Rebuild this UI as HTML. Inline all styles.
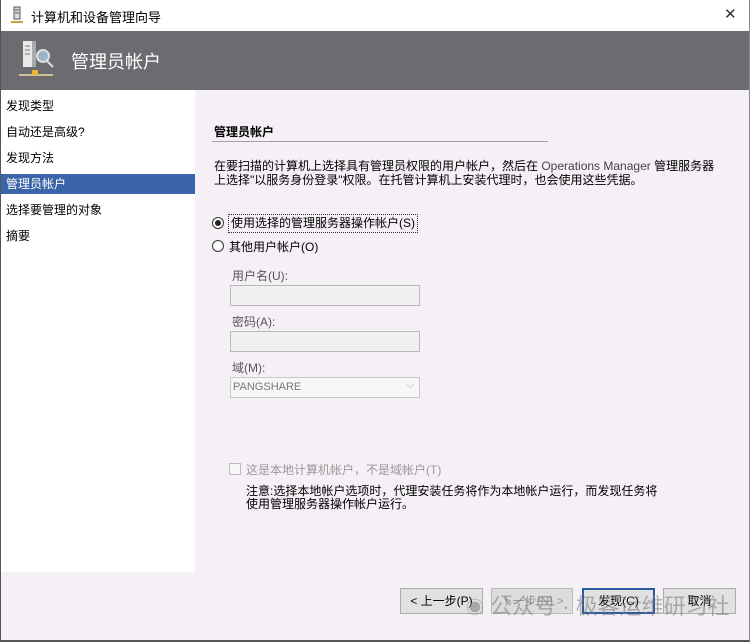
<!DOCTYPE html>
<html><head><meta charset="utf-8"><style>
*{margin:0;padding:0;box-sizing:border-box}
body{width:750px;height:642px;overflow:hidden;background:#f5eff6;font-family:"Liberation Sans","Noto Sans CJK SC",sans-serif;font-size:12px;color:#000;position:relative}
.abs{position:absolute}
#frame{left:0;top:0;width:750px;height:642px;border-left:1px solid #555;border-right:1px solid #888;border-bottom:2px solid #555}
#title{left:0;top:0;width:750px;height:31px;background:#fff}
#header{left:0;top:31px;width:750px;height:59px;background:#6b6b70}
#left{left:1px;top:90px;width:194px;height:482px;background:#fff}
.nav{position:absolute;left:6px;font-size:12px}
.sel{left:1px;width:194px;height:20px;background:#3b64a8;color:#fff;padding-left:5px;line-height:20px}
.inp{position:absolute;left:230px;width:190px;height:21px;background:#f0f0f0;border:1px solid #b9b9b9}
.btn{position:absolute;top:588px;height:26px;border:1px solid #adadad;background:#e1e1e1;text-align:center;line-height:24px;font-size:12px}
.radio{position:absolute;width:12px;height:12px;border:1px solid #333;border-radius:50%;background:#fff}
</style></head><body>
<div class="abs" id="title"></div>
<svg class="abs" style="left:10px;top:6px" width="14" height="18" viewBox="0 0 14 18"><rect x="4" y="1" width="6" height="12" fill="#ddd" stroke="#555"/><line x1="5" y1="4" x2="9" y2="4" stroke="#555"/><line x1="5" y1="7" x2="9" y2="7" stroke="#555"/><rect x="1" y="15" width="12" height="2" fill="#c8a040"/></svg>
<div class="abs" style="left:31px;top:7px;font-size:13px">计算机和设备管理向导</div>
<div class="abs" style="left:724px;top:5px;font-size:15px;color:#333">✕</div>
<div class="abs" id="header"></div>
<svg class="abs" style="left:16px;top:40px" width="40" height="40" viewBox="0 0 40 40"><rect x="7" y="1" width="9" height="26" fill="#e8e8e8"/><rect x="16" y="1" width="4" height="26" fill="#aaa"/><line x1="9" y1="6" x2="14" y2="6" stroke="#777"/><line x1="9" y1="10" x2="14" y2="10" stroke="#777"/><line x1="9" y1="14" x2="14" y2="14" stroke="#777"/><circle cx="27" cy="16" r="6" fill="#9bb4c8" stroke="#ddd" stroke-width="2"/><line x1="31" y1="21" x2="37" y2="27" stroke="#ddd" stroke-width="2"/><rect x="3" y="34" width="34" height="2" fill="#d0c090"/><rect x="16" y="30" width="6" height="5" fill="#e8b830"/></svg>
<div class="abs" style="left:71px;top:48px;font-size:18px;color:#fff">管理员帐户</div>
<div class="abs" id="left"></div>
<div class="nav" style="top:97px">发现类型</div>
<div class="nav" style="top:123px">自动还是高级?</div>
<div class="nav" style="top:149px">发现方法</div>
<div class="abs sel" style="top:174px">管理员帐户</div>
<div class="nav" style="top:201px">选择要管理的对象</div>
<div class="nav" style="top:227px">摘要</div>
<div class="abs" style="left:214px;top:123px;font-weight:bold;font-size:12px">管理员帐户</div>
<div class="abs" style="left:212px;top:141px;width:336px;height:1px;background:#a0a0a0"></div>
<div class="abs" style="left:214px;top:159px;line-height:14px;width:520px">在要扫描的计算机上选择具有管理员权限的用户帐户，然后在 <span style="color:#444">Operations Manager</span> 管理服务器<br>上选择"以服务身份登录"权限。在托管计算机上安装代理时，也会使用这些凭据。</div>
<div class="radio" style="left:212px;top:217px"><div style="position:absolute;left:2px;top:2px;width:6px;height:6px;border-radius:50%;background:#222"></div></div>
<div class="abs" style="left:228px;top:214px;border:1px dotted #333;padding:0 2px;height:19px;line-height:17px">使用选择的管理服务器操作帐户(S)</div>
<div class="radio" style="left:212px;top:240px"></div>
<div class="abs" style="left:229px;top:238px">其他用户帐户(O)</div>
<div class="abs" style="left:232px;top:267px;color:#555">用户名(U):</div>
<div class="inp" style="top:285px"></div>
<div class="abs" style="left:232px;top:313px;color:#555">密码(A):</div>
<div class="inp" style="top:331px"></div>
<div class="abs" style="left:232px;top:359px;color:#555">域(M):</div>
<div class="inp" style="top:377px;background:#f7f7f7;border-color:#c8c8c8"><span style="position:absolute;left:2px;top:3px;color:#777;font-size:11px">PANGSHARE</span><span style="position:absolute;right:5px;top:2px;color:#aaa;font-size:10px">⌵</span></div>
<div class="abs" style="left:229px;top:463px;width:12px;height:12px;border:1px solid #bbb;background:#f7f7f7"></div>
<div class="abs" style="left:246px;top:461px;color:#999">这是本地计算机帐户，不是域帐户(T)</div>
<div class="abs" style="left:246px;top:485px;line-height:13px;width:440px">注意:选择本地帐户选项时，代理安装任务将作为本地帐户运行，而发现任务将<br>使用管理服务器操作帐户运行。</div>
<div class="btn" style="left:400px;width:83px">&lt; 上一步(P)</div>
<div class="btn" style="left:491px;width:82px;color:#999;background:#dcdcdc;border-color:#bbb">下一步(N) &gt;</div>
<div class="btn" style="left:582px;width:73px;border:2px solid #2b5aa0;line-height:22px">发现(C)</div>
<div class="btn" style="left:663px;width:73px">取消</div>
<div class="abs" style="left:466px;top:589px;font-size:22px;color:rgba(120,120,120,0.55)"><span style="font-size:18px">◉</span> 公众号 · 极客运维研习社</div>
<div class="abs" id="frame"></div>
</body></html>
